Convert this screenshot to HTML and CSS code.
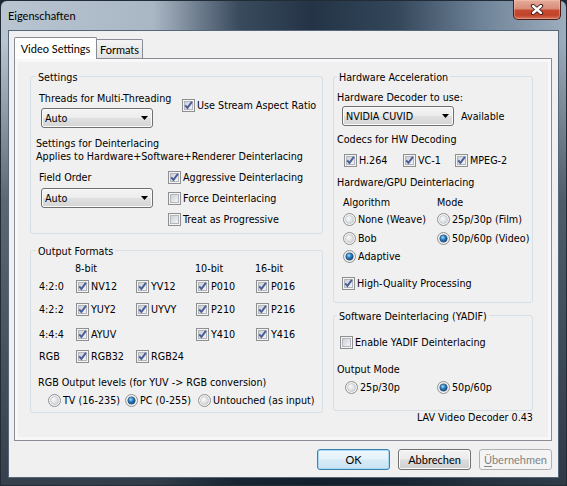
FILE: index.html
```html
<!DOCTYPE html>
<html>
<head>
<meta charset="utf-8">
<title>Eigenschaften</title>
<link rel="stylesheet" href="styles.css">
</head>
<body>
<svg class="defs" width="0" height="0" aria-hidden="true">
  <defs>
    <linearGradient id="cbIn" x1="0" y1="0" x2="1" y2="1">
      <stop offset="0" stop-color="#c9cdd4"/>
      <stop offset="1" stop-color="#f7f7f7"/>
    </linearGradient>
    <radialGradient id="rbIn" cx="0.35" cy="0.35" r="0.8">
      <stop offset="0" stop-color="#fafafa"/>
      <stop offset="1" stop-color="#cdd1d6"/>
    </radialGradient>
    <radialGradient id="rbDot" cx="0.4" cy="0.35" r="0.75">
      <stop offset="0" stop-color="#a6dcf8"/>
      <stop offset="0.45" stop-color="#2b7cc2"/>
      <stop offset="1" stop-color="#0c3a69"/>
    </radialGradient>
    <symbol id="cb" viewBox="0 0 13 13">
      <rect x="0.5" y="0.5" width="12" height="12" fill="#f4f4f4" stroke="#8e8f8f"/>
      <rect x="2.5" y="2.5" width="8" height="8" fill="url(#cbIn)" stroke="#b3b7bd"/>
    </symbol>
    <symbol id="cbc" viewBox="0 0 13 13">
      <use href="#cb"/>
      <path d="M3.2 6.3 L5.4 8.9 L9.9 2.9" fill="none" stroke="#4a5e98" stroke-width="1.9"/>
    </symbol>
    <symbol id="rb" viewBox="0 0 13 13">
      <circle cx="6.5" cy="6.5" r="6" fill="#f3f3f3" stroke="#8e8f8f"/>
      <circle cx="6.5" cy="6.5" r="4" fill="url(#rbIn)" stroke="#c3c7cb" stroke-width="0.8"/>
    </symbol>
    <symbol id="rbc" viewBox="0 0 13 13">
      <use href="#rb"/>
      <circle cx="6.5" cy="6.5" r="3.6" fill="url(#rbDot)" stroke="#1b4978" stroke-width="0.6"/>
    </symbol>
    <symbol id="arrow" viewBox="0 0 7 4">
      <path d="M0 0 H7 L3.5 4 Z" fill="#000"/>
    </symbol>
  </defs>
</svg>

<div class="window">
  <div class="titlebar">
    <span class="title">Eigenschaften</span>
    <div class="close">
      <svg width="14" height="11" viewBox="0 0 14 11">
        <path d="M3 2 L11 9 M11 2 L3 9" stroke="#3b1610" stroke-width="4.2" stroke-linecap="round"/>
        <path d="M3 2 L11 9 M11 2 L3 9" stroke="#ffffff" stroke-width="2.4" stroke-linecap="round"/>
      </svg>
    </div>
  </div>

  <div class="client">
    <div class="tabs">
      <div class="tab active">Video Settings</div>
      <div class="tab">Formats</div>
    </div>

    <div class="panel">
      <div class="page">
        <div class="col col-left">
          <div class="group group-l g-settings">
            <div class="gtitle">Settings</div>
            <div class="row row1">
              <div class="field f1">
                <div class="lbl">Threads for Multi-Threading</div>
                <div class="combo c1"><span>Auto</span><svg class="arr"><use href="#arrow"/></svg></div>
              </div>
              <div class="chk chk-aspect"><svg><use href="#cbc"/></svg><span>Use Stream Aspect Ratio</span></div>
            </div>
            <div class="note">Settings for Deinterlacing<br>Applies to Hardware+Software+Renderer Deinterlacing</div>
            <div class="row row2">
              <div class="field f2">
                <div class="lbl">Field Order</div>
                <div class="combo c2"><span>Auto</span><svg class="arr"><use href="#arrow"/></svg></div>
              </div>
              <div class="checks">
                <div class="chk"><svg><use href="#cbc"/></svg><span>Aggressive Deinterlacing</span></div>
                <div class="chk"><svg><use href="#cb"/></svg><span>Force Deinterlacing</span></div>
                <div class="chk"><svg><use href="#cb"/></svg><span>Treat as Progressive</span></div>
              </div>
            </div>
          </div>

          <div class="group group-l g-output">
            <div class="gtitle">Output Formats</div>
            <div class="fmt">
              <span></span><span class="hd">8-bit</span><span></span><span class="hd">10-bit</span><span class="hd">16-bit</span>

              <span>4:2:0</span>
              <div class="chk"><svg><use href="#cbc"/></svg><span>NV12</span></div>
              <div class="chk"><svg><use href="#cbc"/></svg><span>YV12</span></div>
              <div class="chk"><svg><use href="#cbc"/></svg><span>P010</span></div>
              <div class="chk"><svg><use href="#cbc"/></svg><span>P016</span></div>

              <span>4:2:2</span>
              <div class="chk"><svg><use href="#cbc"/></svg><span>YUY2</span></div>
              <div class="chk"><svg><use href="#cbc"/></svg><span>UYVY</span></div>
              <div class="chk"><svg><use href="#cbc"/></svg><span>P210</span></div>
              <div class="chk"><svg><use href="#cbc"/></svg><span>P216</span></div>

              <span>4:4:4</span>
              <div class="chk"><svg><use href="#cbc"/></svg><span>AYUV</span></div>
              <span></span>
              <div class="chk"><svg><use href="#cbc"/></svg><span>Y410</span></div>
              <div class="chk"><svg><use href="#cbc"/></svg><span>Y416</span></div>

              <span>RGB</span>
              <div class="chk"><svg><use href="#cbc"/></svg><span>RGB32</span></div>
              <div class="chk"><svg><use href="#cbc"/></svg><span>RGB24</span></div>
              <span></span><span></span>
            </div>
            <div class="lvl">RGB Output levels (for YUV -&gt; RGB conversion)</div>
            <div class="radios lvl-radios">
              <div class="rad w77"><svg><use href="#rb"/></svg><span>TV (16-235)</span></div>
              <div class="rad w73"><svg><use href="#rbc"/></svg><span>PC (0-255)</span></div>
              <div class="rad"><svg><use href="#rb"/></svg><span>Untouched (as input)</span></div>
            </div>
          </div>
        </div>

        <div class="col col-right">
          <div class="group group-r g-hw">
            <div class="gtitle">Hardware Acceleration</div>
            <div class="lbl m7">Hardware Decoder to use:</div>
            <div class="dec">
              <div class="combo c3"><span>NVIDIA CUVID</span><svg class="arr"><use href="#arrow"/></svg></div>
              <span class="avail">Available</span>
            </div>
            <div class="lbl m7">Codecs for HW Decoding</div>
            <div class="codecs">
              <div class="chk w59"><svg><use href="#cbc"/></svg><span>H.264</span></div>
              <div class="chk w52"><svg><use href="#cbc"/></svg><span>VC-1</span></div>
              <div class="chk"><svg><use href="#cbc"/></svg><span>MPEG-2</span></div>
            </div>
            <div class="lbl m9">Hardware/GPU Deinterlacing</div>
            <div class="algo">
              <span>Algorithm</span><span>Mode</span>
              <div class="rad"><svg><use href="#rb"/></svg><span>None (Weave)</span></div>
              <div class="rad"><svg><use href="#rb"/></svg><span>25p/30p (Film)</span></div>
              <div class="rad"><svg><use href="#rb"/></svg><span>Bob</span></div>
              <div class="rad"><svg><use href="#rbc"/></svg><span>50p/60p (Video)</span></div>
              <div class="rad"><svg><use href="#rbc"/></svg><span>Adaptive</span></div>
              <span></span>
            </div>
            <div class="chk hq"><svg><use href="#cbc"/></svg><span>High-Quality Processing</span></div>
          </div>

          <div class="group group-r g-sw">
            <div class="gtitle">Software Deinterlacing (YADIF)</div>
            <div class="chk yadif"><svg><use href="#cb"/></svg><span>Enable YADIF Deinterlacing</span></div>
            <div class="lbl m14">Output Mode</div>
            <div class="radios sw-radios">
              <div class="rad w92"><svg><use href="#rb"/></svg><span>25p/30p</span></div>
              <div class="rad"><svg><use href="#rbc"/></svg><span>50p/60p</span></div>
            </div>
          </div>
          <div class="version">LAV Video Decoder 0.43</div>
        </div>
      </div>
    </div>

    <div class="buttons">
      <div class="btn default">OK</div>
      <div class="btn">Abbrechen</div>
      <div class="btn disabled"><u>Ü</u>bernehmen</div>
    </div>
  </div>
</div>
</body>
</html>
```

FILE: styles.css
```css
* { box-sizing: border-box; }

html, body {
  margin: 0;
  padding: 0;
}

body {
  width: 567px;
  height: 486px;
  overflow: hidden;
  background: #1d2733;
  font-family: "DejaVu Sans", "Liberation Sans", sans-serif;
  font-stretch: condensed;
  font-size: 10.7px;
  line-height: 13px;
  color: #000;
}

.defs {
  position: absolute;
  width: 0;
  height: 0;
  overflow: hidden;
}

/* ---------- window frame ---------- */
.window {
  width: 567px;
  height: 486px;
  border: 1px solid #222c37;
  border-radius: 7px 7px 0 0;
  display: flex;
  flex-direction: column;
  background:
    linear-gradient(180deg, rgba(16,26,38,0) 0px, rgba(16,26,38,0) 40px, rgba(16,26,38,0.55) 200px, rgba(16,26,38,0.78) 486px),
    linear-gradient(90deg, #b9c5d1 0%, #a9b6c4 27%, #3a4b5e 42%, #243446 55%, #33465a 70%, #6f8398 85%, #9cadbd 100%);
}

.titlebar {
  height: 29px;
  flex: none;
  display: flex;
  justify-content: space-between;
  align-items: flex-start;
}

.title {
  font-family: Lato, "Open Sans", sans-serif;
  font-stretch: normal;
  font-size: 11px;
  line-height: 15px;
  margin: 7px 0 0 7px;
  color: #000;
}

.close {
  width: 48px;
  height: 20px;
  margin: -1px 5px 0 0;
  border: 1px solid #4a1e17;
  border-top: none;
  border-radius: 0 0 5px 5px;
  background: linear-gradient(#e6ab9b 0%, #d98e7a 45%, #c64a30 55%, #c1432a 80%, #d6775c 100%);
  box-shadow: inset 0 0 0 1px rgba(255, 215, 200, 0.35);
  display: flex;
  align-items: center;
  justify-content: center;
}

.client {
  flex: 1;
  margin: 0 7px 7px 7px;
  background: #f0f0f0;
  border: 1px solid #56677a;
  padding: 6px 6px 0 5px;
  display: flex;
  flex-direction: column;
}

/* ---------- tabs ---------- */
.tabs {
  display: flex;
  align-items: flex-end;
  height: 21px;
  flex: none;
}

.tab {
  font-family: Lato, "Open Sans", sans-serif;
  font-stretch: normal;
  font-size: 11px;
  line-height: 15px;
  text-align: center;
  border: 1px solid #898c95;
  border-bottom: none;
  white-space: nowrap;
}

.tab.active {
  width: 83px;
  height: 22px;
  margin-bottom: -1px;
  padding-top: 3px;
  background: #ffffff;
  border-radius: 2px 2px 0 0;
  position: relative;
  z-index: 1;
}

.tab:not(.active) {
  width: 46px;
  height: 19px;
  padding-top: 2px;
  background: linear-gradient(#f4f4f4, #e2e2e2);
  border-left: none;
  border-radius: 0 2px 0 0;
}

.panel {
  height: 383px;
  flex: none;
  border: 1px solid #898c95;
  background: #f8f8f8;
  padding: 3px;
}

.page {
  height: 100%;
  background: #f0f0f0;
  display: flex;
  gap: 10px;
  padding: 14px 14px 0 12px;
}

.col {
  display: flex;
  flex-direction: column;
}

.col-left { width: 293px; }
.col-right { width: 200px; }

/* ---------- group boxes ---------- */
.group {
  border: 1px solid #d5dfe5;
  border-radius: 3px;
  white-space: nowrap;
}

.gtitle {
  width: max-content;
  margin-top: -6px;
  padding: 0 2px;
  background: #f0f0f0;
}

.group-l { padding-left: 8px; }
.group-l .gtitle { margin-left: -3px; }
.group-r { padding-left: 3px; }

.g-settings { height: 158px; }
.g-output { height: 163px; margin-top: 16px; }
.g-hw { height: 227px; }
.g-sw { height: 96px; margin-top: 12px; }

.lbl { height: 13px; }

/* ---------- controls ---------- */
.chk, .rad {
  display: flex;
  align-items: center;
  height: 13px;
  white-space: nowrap;
}

.chk svg, .rad svg {
  width: 13px;
  height: 13px;
  flex: none;
  margin-right: 2px;
}

.combo {
  height: 20px;
  width: 112px;
  border: 1px solid #707070;
  border-radius: 3px;
  background: linear-gradient(#f4f4f4 0%, #ececec 48%, #e0e0e0 52%, #d4d4d4 100%);
  box-shadow: inset 0 0 0 1px #fbfbfb;
  display: flex;
  align-items: center;
  justify-content: space-between;
  padding: 0 4px 0 3px;
}

.combo .arr {
  width: 7px;
  height: 4px;
}

/* ---------- settings group ---------- */
.row {
  display: flex;
  align-items: flex-start;
}

.row1 { margin-top: 8px; }
.f1 { width: 143px; }
.c1 { margin: 3px 0 0 2px; }
.chk-aspect { margin-top: 7px; }

.note {
  margin: 9px 0 0 -3px;
}

.row2 { margin-top: 8px; }
.f2 { width: 129px; }
.c2 { margin: 4px 0 0 2px; }

.checks {
  display: flex;
  flex-direction: column;
  gap: 8px;
}

/* ---------- output formats ---------- */
.fmt {
  margin-top: 4px;
  display: grid;
  grid-template-columns: 37px 60px 60px 60px 60px;
  grid-template-rows: 18px 23px 25px 22px 13px;
  align-items: start;
}

.fmt > span { height: 13px; }
.fmt .hd { margin-left: -1px; }

.lvl {
  margin: 13px 0 0 -1px;
}

.radios {
  display: flex;
  margin-top: 5px;
}

.lvl-radios { margin-left: 9px; }
.w77 { width: 77px; }
.w73 { width: 73px; }

/* ---------- hardware group ---------- */
.m7 { margin-top: 7px; }
.m9 { margin-top: 9px; }
.m14 { margin-top: 14px; }

.dec {
  display: flex;
  align-items: center;
  margin-top: 2px;
}

.c3 { margin-left: 5px; }
.avail { margin-left: 7px; }

.codecs {
  display: flex;
  margin: 8px 0 0 7px;
}

.w59 { width: 59px; }
.w52 { width: 52px; }

.algo {
  display: grid;
  grid-template-columns: 94px auto;
  grid-template-rows: 17px 19px 18px 13px;
  align-items: start;
  margin: 7px 0 0 6px;
}

.hq { margin: 14px 0 0 5px; }

/* ---------- software group ---------- */
.yadif { margin: 13px 0 0 3px; }
.sw-radios { margin-left: 8px; }
.w92 { width: 92px; }

.version {
  text-align: right;
  white-space: nowrap;
}

/* ---------- buttons ---------- */
.buttons {
  display: flex;
  justify-content: flex-end;
  gap: 8px;
  margin-top: 8px;
}

.btn {
  width: 73px;
  height: 21px;
  border: 1px solid #707070;
  border-radius: 3px;
  background: linear-gradient(#f2f2f2 0%, #ebebeb 48%, #dddddd 52%, #cfcfcf 100%);
  box-shadow: inset 0 0 0 1px #fbfbfb;
  font-family: Lato, "Open Sans", sans-serif;
  font-stretch: normal;
  font-size: 11px;
  line-height: 19px;
  text-align: center;
  color: #000;
  white-space: nowrap;
}

.btn.default {
  border-color: #3c7fb1;
  background: linear-gradient(#eef7fc 0%, #e4f2fa 48%, #d6ebf6 52%, #c9e3f1 100%);
  box-shadow: inset 0 0 0 1px #a9daf4;
}

.btn.disabled {
  border-color: #adb2b5;
  background: #f4f4f4;
  box-shadow: none;
  color: #838383;
}

.btn u {
  text-decoration: underline;
  text-underline-offset: 2px;
}
```
